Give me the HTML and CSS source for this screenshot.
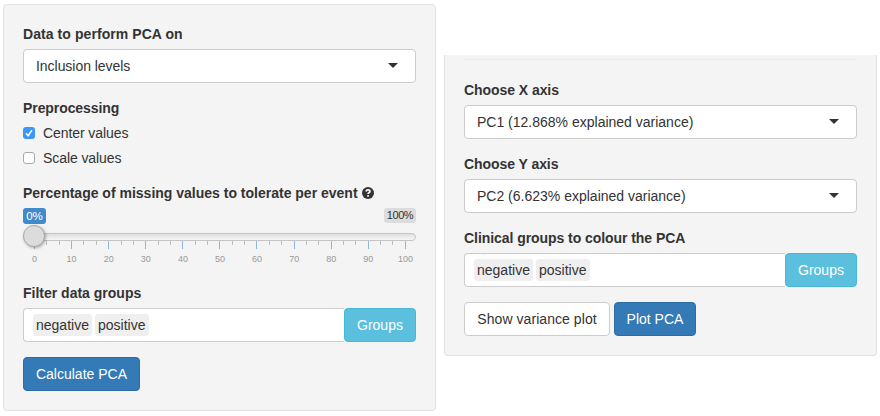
FILE: index.html
```html
<!DOCTYPE html>
<html lang="en">
<head>
<meta charset="utf-8">
<title>PCA</title>
<link rel="stylesheet" href="styles.css">
</head>
<body>
<main class="layout">
  <form class="well">
    <div class="group">
      <label class="label l-data">Data to perform PCA on</label>
      <div class="select"><span class="t-incl">Inclusion levels</span><i class="caret"></i></div>
    </div>
    <div class="group">
      <label class="label l-pre">Preprocessing</label>
      <label class="check"><span class="box checked"><svg viewBox="0 0 12 12"><path d="M3 6.3 5.1 8.7 9 3.1"/></svg></span><span class="t-check">Center values</span></label>
      <label class="check"><span class="box"></span><span class="t-check">Scale values</span></label>
    </div>
    <div class="group">
      <label class="label"><span>Percentage of missing values to tolerate per event</span><svg class="help" viewBox="0 0 12 12"><circle cx="6" cy="6" r="6"/><path d="M4 4.5C4.2 3.2 5 2.8 6 2.8c1.200 0 2 .7 2 1.600C8 5.600 6.100 5.500 6.100 7.100"/><path d="M5.200 8.800h1.700"/></svg></label>
      <div class="slider">
        <div class="badges"><span class="badge now">0%</span><span class="badge max">100%</span></div>
        <div class="track"><span class="handle"></span></div>
        <div class="ticks"><i></i><i></i><i></i><i></i><i></i><i></i><i></i><i></i><i></i><i></i><i></i><i></i><i></i><i></i><i></i><i></i><i></i><i></i><i></i><i></i><i></i><i></i><i></i><i></i><i></i><i></i><i></i><i></i><i></i><i></i><i></i></div>
        <div class="numbers"><span>0</span><span>10</span><span>20</span><span>30</span><span>40</span><span>50</span><span>60</span><span>70</span><span>80</span><span>90</span><span>100</span></div>
      </div>
    </div>
    <div class="group">
      <label class="label">Filter data groups</label>
      <div class="input-group"><div class="tags"><span class="tag neg">negative</span><span class="tag pos">positive</span></div><button type="button" class="btn info">Groups</button></div>
    </div>
    <div class="buttons"><button type="button" class="btn primary calc">Calculate PCA</button></div>
  </form>

  <form class="well continued">
    <hr>
    <div class="group">
      <label class="label l-axis">Choose X axis</label>
      <div class="select"><span>PC1 (12.868% explained variance)</span><i class="caret"></i></div>
    </div>
    <div class="group">
      <label class="label l-axis">Choose Y axis</label>
      <div class="select"><span>PC2 (6.623% explained variance)</span><i class="caret"></i></div>
    </div>
    <div class="group">
      <label class="label l-clin">Clinical groups to colour the PCA</label>
      <div class="input-group"><div class="tags"><span class="tag neg">negative</span><span class="tag pos">positive</span></div><button type="button" class="btn info">Groups</button></div>
    </div>
    <div class="buttons"><button type="button" class="btn default">Show variance plot</button><button type="button" class="btn primary plot">Plot PCA</button></div>
  </form>
</main>
</body>
</html>
```
FILE: styles.css
```css
* { box-sizing: border-box; }
body {
  margin: 0;
  background: #fff;
  color: #333;
  font: 14px/20px "Liberation Sans", Arial, sans-serif;
}
.layout { display: flex; align-items: flex-start; gap: 8px; padding: 4px 3px 0; }
.well {
  width: 433px;
  padding: 19px;
  background: #f4f4f4;
  border: 1px solid #e2e2e2;
  border-radius: 4px;
}
.continued { margin-top: 51px; padding-top: 4px; border-top: 0; border-radius: 0 0 4px 4px; }
hr { height: 1px; margin: 0 0 20px; border: 0; background: #ebebeb; }
.group { margin-bottom: 15px; }
.label { display: flex; align-items: center; height: 20px; margin-bottom: 5px; font-weight: 700; white-space: nowrap; }
.l-data { letter-spacing: .07px; }
.l-pre { letter-spacing: -.08px; }
.l-axis, .l-clin { letter-spacing: -.06px; }
.select {
  display: flex;
  align-items: center;
  justify-content: space-between;
  height: 34px;
  padding: 0 17px 0 12px;
  background: #fff;
  border: 1px solid #ccc;
  border-radius: 4px;
}
.t-incl { letter-spacing: -.04px; }
.t-check { letter-spacing: -.08px; }
.caret { margin-bottom: 2px; border: 5px solid transparent; border-top-color: #333; border-bottom: 0; }
.check { display: flex; align-items: center; gap: 8px; height: 20px; }
.check + .check { margin-top: 5px; }
.box { width: 12px; height: 12px; background: #fff; border: 1px solid #aaa; border-radius: 3px; }
.checked { border: 0; background: #3c96f8; }
.box svg { display: block; fill: none; stroke: #fff; stroke-width: 1.5; }
.help { width: 12px; height: 12px; margin-left: 4px; fill: #333; }
.help path { fill: none; stroke: #f4f4f4; stroke-width: 1.7; }
.slider { height: 60px; }
.badges { display: flex; align-items: flex-start; justify-content: space-between; height: 25px; }
.badge { height: 15px; border-radius: 3px; background: #dcdcdc; font-size: 11px; line-height: 15px; text-align: center; }
.max { width: 32px; letter-spacing: -.4px; }
.now { width: 23px; height: 16px; line-height: 16px; background: #428bca; color: #fff; font-size: 11.5px; }
.track {
  position: relative;
  height: 8px;
  border: 1px solid #c5c5c5;
  border-radius: 5px;
  background: linear-gradient(#dedede, #f7f7f7);
}
.handle {
  position: absolute;
  left: -1px;
  top: -9px;
  width: 22px;
  height: 22px;
  border: 1px solid #aaa;
  border-radius: 50%;
  background: #dcdcdc;
  box-shadow: 1px 1px 3px rgba(0, 0, 0, .3);
}
.ticks, .numbers { display: flex; justify-content: space-between; padding: 0 10px 0 11px; }
.ticks { height: 11px; }
.ticks i { width: 1px; height: 4px; background: #bbb; }
.ticks i:nth-child(3n + 1) { height: 8px; background: #8fb9df; }
.numbers { font-size: 9px; line-height: 14px; color: #999; }
.numbers span { display: flex; justify-content: center; width: 1px; }
.input-group { display: flex; height: 34px; }
.tags { display: flex; align-items: center; gap: 3px; flex: 1; padding-left: 9px; background: #fff; border: 1px solid #ccc; border-right: 0; border-radius: 4px 0 0 4px; }
.tag { height: 22px; padding: 0 3px; background: #efefef; border-radius: 3px; line-height: 22px; }
.neg { width: 59px; }
.pos { width: 54px; }
.buttons { display: flex; gap: 4px; }
.btn { height: 34px; padding: 0; border: 1px solid; border-radius: 4px; font: inherit; white-space: nowrap; }
.info { width: 72px; background: #5bc0de; border-color: #46b8da; color: #fff; }
.primary { background: #337ab7; border-color: #2e6da4; color: #fff; }
.default { width: 146px; background: #fff; border-color: #ccc; color: #333; letter-spacing: .06px; }
.calc { width: 117px; }
.plot { width: 82px; }
```
